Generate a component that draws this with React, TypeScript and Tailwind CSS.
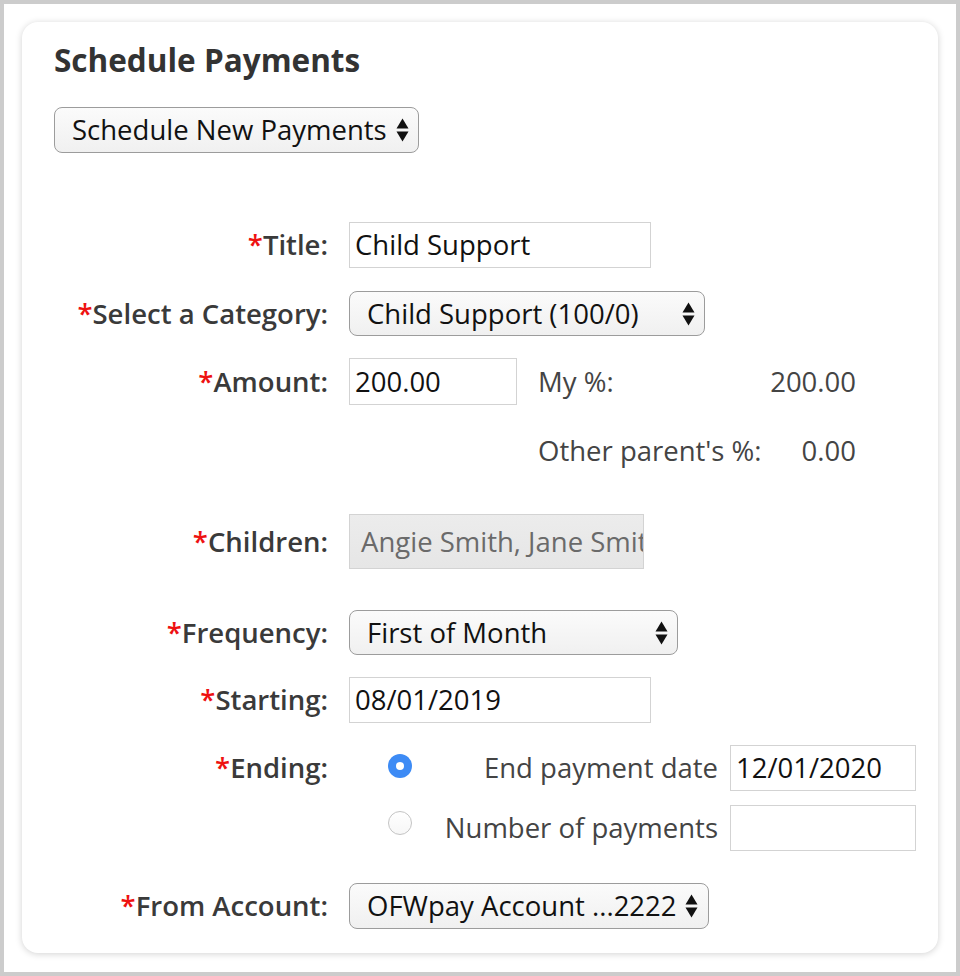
import React from 'react';

const Arrows: React.FC = () => (
  <svg width="13" height="24" viewBox="0 0 13 24" className="shrink-0">
    <path d="M6.5 0.5 L12.5 10.5 H0.5 Z" fill="#111" />
    <path d="M6.5 23.5 L12.5 13.5 H0.5 Z" fill="#111" />
  </svg>
);

const Select: React.FC<{ value: string; width: string; className?: string }> = ({ value, width, className }) => (
  <div
    className={`flex shrink-0 items-center justify-between h-[46px] pl-[17px] pr-[9px] rounded-[8px] border border-[#9c9c9c] bg-gradient-to-b from-[#fbfbfb] to-[#f0f0f0] text-[27.5px] text-[#111] ${width} ${className ?? ''}`}
  >
    <span className="whitespace-nowrap">{value}</span>
    <Arrows />
  </div>
);

const TextInput: React.FC<{ value?: string; width: string }> = ({ value, width }) => (
  <div className={`flex shrink-0 items-center h-[46px] px-[5px] border border-[#d3d3d3] bg-white text-[27.5px] text-[#111] ${width}`}>
    {value}
  </div>
);

const Label: React.FC<{ children: React.ReactNode }> = ({ children }) => (
  <div className="w-[274px] shrink-0 text-right text-[27.5px] font-semibold text-[#3a3a3a] whitespace-nowrap">
    <span className="text-[#ee1111]">*</span>
    {children}
  </div>
);

const Row: React.FC<{ label: string; className: string; children: React.ReactNode }> = ({ label, className, children }) => (
  <div className={`flex items-center gap-[21px] ${className}`}>
    <Label>{label}</Label>
    {children}
  </div>
);

export default function App() {
  return (
    <div
      className="w-[960px] h-[976px] border-4 border-[#cccccc] bg-white p-[18px] leading-none"
      style={{ fontFamily: '"Open Sans", "Liberation Sans", sans-serif' }}
    >
      <div className="h-[931px] rounded-[16px] bg-white shadow-[0_1px_7px_rgba(0,0,0,0.18)] px-[32px] pt-[22px]">
        <h1 className="text-[31.5px] leading-[32px] font-bold text-[#333]">Schedule Payments</h1>

        <Select value="Schedule New Payments" width="w-[365px]" className="mt-[31px]" />

        <Row label="Title:" className="mt-[69px] h-[46px]">
          <TextInput value="Child Support" width="w-[302px]" />
        </Row>

        <Row label="Select a Category:" className="mt-[23px] h-[45px]">
          <Select value="Child Support (100/0)" width="w-[356px] !h-[45px]" />
        </Row>

        <Row label="Amount:" className="mt-[22px] h-[47px]">
          <TextInput value="200.00" width="w-[168px] !h-[47px]" />
          <div className="flex shrink-0 w-[318px] justify-between text-[27.5px] text-[#444]">
            <span>My %:</span>
            <span>200.00</span>
          </div>
        </Row>

        <div className="mt-[23px] h-[46px] flex items-center pl-[484px]">
          <div className="flex shrink-0 w-[318px] justify-between text-[27.5px] text-[#444]">
            <span>Other parent's %:</span>
            <span>0.00</span>
          </div>
        </div>

        <Row label="Children:" className="mt-[40px] h-[55px]">
          <div className="flex shrink-0 items-center h-[55px] w-[295px] pl-[11px] overflow-hidden whitespace-nowrap border border-[#d3d3d3] bg-gradient-to-b from-[#ececec] to-[#e6e6e6] text-[27.5px] text-[#6a6a6a]">
            Angie Smith, Jane Smith
          </div>
        </Row>

        <Row label="Frequency:" className="mt-[41px] h-[45px]">
          <Select value="First of Month" width="w-[329px] !h-[45px]" />
        </Row>

        <Row label="Starting:" className="mt-[22px] h-[46px]">
          <TextInput value="08/01/2019" width="w-[302px]" />
        </Row>

        <Row label="Ending:" className="mt-[22px] h-[46px]">
          <div className="flex shrink-0 items-center">
            <div className="shrink-0 ml-[39px] mb-[4px] w-[24px] h-[24px] rounded-full bg-[#3d8bf5] flex items-center justify-center">
              <div className="w-[8px] h-[8px] rounded-full bg-white" />
            </div>
            <div className="shrink-0 w-[318px] pr-[12px] text-right text-[27.5px] text-[#444] whitespace-nowrap">End payment date</div>
            <TextInput value="12/01/2020" width="w-[186px]" />
          </div>
        </Row>

        <div className="mt-[14px] h-[46px] flex items-center pl-[334px]">
          <div className="shrink-0 mb-[10px] w-[24px] h-[24px] rounded-full border border-[#c4c4c4] bg-gradient-to-b from-white to-[#f7f7f7]" />
          <div className="shrink-0 w-[318px] pr-[12px] text-right text-[27.5px] text-[#444] whitespace-nowrap">Number of payments</div>
          <TextInput width="w-[186px]" />
        </div>

        <Row label="From Account:" className="mt-[32px] h-[46px]">
          <Select value="OFWpay Account ...2222" width="w-[360px]" className="!pl-[17px] !pr-[10px]" />
        </Row>
      </div>
    </div>
  );
}
